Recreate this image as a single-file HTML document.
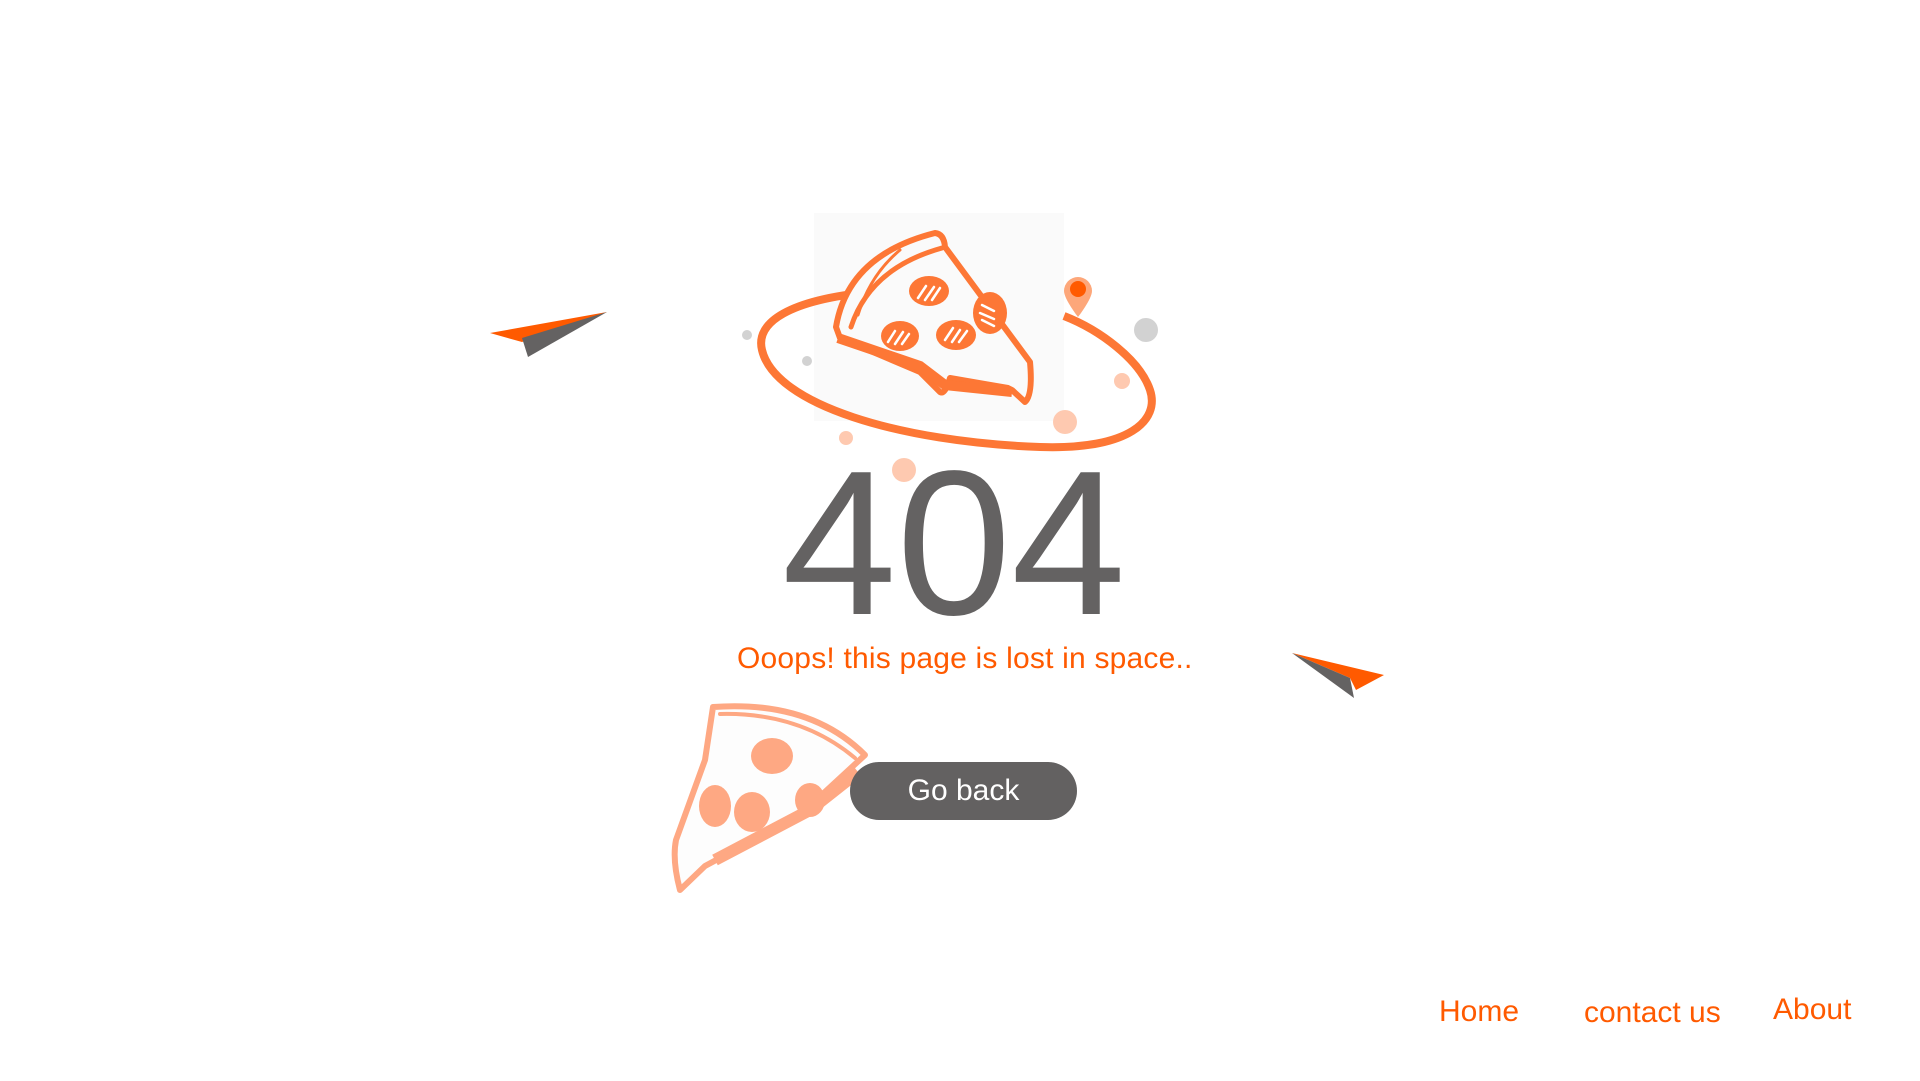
<!DOCTYPE html>
<html><head><meta charset="utf-8"><style>
html,body{margin:0;padding:0;background:#fff;width:1920px;height:1081px;overflow:hidden;position:relative;font-family:"Comic Sans MS","Liberation Sans",sans-serif}
.t{position:absolute;white-space:nowrap}
</style></head><body>
<svg width="1920" height="1081" style="position:absolute;left:0;top:0">
<rect x="814" y="213" width="250" height="208" fill="#fafafa"/>
<path d="M870,292 C790,300 755,322 762,350 C775,405 900,442 1040,447 C1130,450 1160,420 1150,390 C1140,360 1100,330 1064,316" fill="none" stroke="#fd7735" stroke-width="8"/>
<g stroke="#fd7735" fill="#fafafa" stroke-width="6" stroke-linejoin="round" stroke-linecap="round">
<path d="M836,327 Q848,255 935,233 Q944,234 945,247 L1030,362 Q1033,395 1025,402 L1012,390 L1008,388 L950,378 Q945,395 940,392 L920,372 L840,338 Z"/>
<path d="M851,327 Q870,268 942,248" fill="none" stroke-width="5"/>
<path d="M858,315 Q870,275 900,250" fill="none" stroke-width="3"/>
</g>
<g fill="#fd7735">
<ellipse cx="929" cy="291" rx="20" ry="15"/>
<ellipse cx="900" cy="336" rx="19" ry="15"/>
<ellipse cx="956" cy="335" rx="20" ry="15"/>
<ellipse cx="990" cy="313" rx="17" ry="21"/>
</g>
<g stroke="#fff" stroke-width="2.5" stroke-linecap="round">
<path d="M918,298 l8,-12 M925,300 l9,-13 M932,300 l8,-12 M888,342 l7,-11 M895,344 l8,-12 M902,344 l7,-10 M945,340 l8,-12 M952,342 l8,-12 M959,342 l8,-11 M982,305 l12,6 M980,313 l14,6 M982,320 l12,6"/>
</g>
<path d="M838,338 L920,366 L945,385 L1012,392" fill="none" stroke="#fd7735" stroke-width="10"/>
<path d="M1078,277 a14,14 0 0 1 14,14 c0,8 -14,26 -14,26 c0,0 -14,-18 -14,-26 a14,14 0 0 1 14,-14z" fill="#fda77a"/>
<circle cx="1078" cy="289" r="8" fill="#ff5a00"/>
<circle cx="747" cy="335" r="5" fill="#d2d2d2"/>
<circle cx="807" cy="361" r="5" fill="#d2d2d2"/>
<circle cx="1146" cy="330" r="12" fill="#d2d2d2"/>
<circle cx="1122" cy="381" r="8" fill="#fec9b0"/>
<circle cx="1065" cy="422" r="12" fill="#fec9b0"/>
<circle cx="846" cy="438" r="7" fill="#fec9b0"/>
<circle cx="904" cy="470" r="12" fill="#fec9b0"/>
<polygon points="490,333 607,312 522,342" fill="#ff5a00"/>
<polygon points="522,338 607,312 528,357" fill="#646262"/>
<polygon points="1292,653 1384,675 1356,690 1350,678" fill="#ff5a00"/>
<polygon points="1292,653 1350,678 1354,698" fill="#646262"/>
<g stroke="#fea883" fill="#fdfdfd" stroke-width="6" stroke-linejoin="round" stroke-linecap="round">
<path d="M713,707 Q810,700 865,755 L800,815 L705,866 L680,890 Q672,860 676,840 L705,760 Z"/>
<path d="M720,714 Q800,712 855,758" fill="none" stroke-width="4"/>
</g>
<g fill="#fea883">
<ellipse cx="772" cy="756" rx="21" ry="18"/>
<ellipse cx="715" cy="806" rx="16" ry="21"/>
<ellipse cx="752" cy="812" rx="18" ry="20"/>
<ellipse cx="810" cy="800" rx="15" ry="17"/>
</g>
<path d="M715,860 L810,810 L858,772" fill="none" stroke="#fea883" stroke-width="12"/>
</svg>
<div class="t" style="left:782px;top:440px;font-family:'Liberation Sans',sans-serif;font-size:206px;color:#646262;line-height:1">404</div>
<div class="t" style="left:737px;top:642px;font-size:30px;color:#ff5a00;letter-spacing:0.2px">Ooops! this page is lost in space..</div>
<div style="position:absolute;left:850px;top:762px;width:227px;height:58px;border-radius:29px;background:#636161;color:#fff;font-size:30px;line-height:58px;text-align:center">Go back</div>
<div class="t" style="left:1439px;top:995px;font-size:30px;color:#ff5a00">Home</div>
<div class="t" style="left:1584px;top:996px;font-size:30px;color:#ff5a00">contact us</div>
<div class="t" style="left:1773px;top:993px;font-size:30px;color:#ff5a00">About</div>
</body></html>
